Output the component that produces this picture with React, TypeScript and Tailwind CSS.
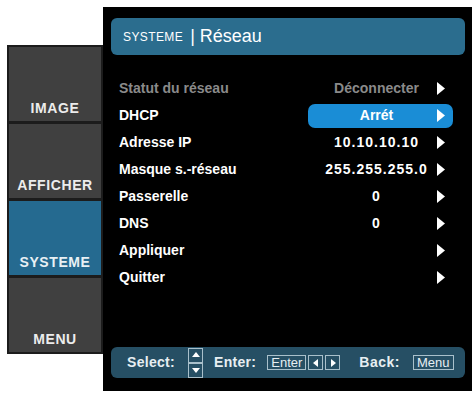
import React from 'react';

const font = { fontFamily: '"Liberation Sans", Arial, sans-serif' };

type Row = { label: string; value?: string; dim?: boolean; active?: boolean; num?: boolean };

const rows: Row[] = [
  { label: 'Statut du réseau', value: 'Déconnecter', dim: true },
  { label: 'DHCP', value: 'Arrét', active: true },
  { label: 'Adresse IP', value: '10.10.10.10', num: true },
  { label: 'Masque s.-réseau', value: '255.255.255.0', num: true },
  { label: 'Passerelle', value: '0', num: true },
  { label: 'DNS', value: '0', num: true },
  { label: 'Appliquer' },
  { label: 'Quitter' },
];

const tabs = [
  { name: 'IMAGE' },
  { name: 'AFFICHER' },
  { name: 'SYSTEME', active: true },
  { name: 'MENU' },
];

function Arrow({ color = '#ffffff' }: { color?: string }) {
  return (
    <svg width="8" height="13" viewBox="0 0 8 13">
      <path d="M0 0 L8 6.5 L0 13 Z" fill={color} />
    </svg>
  );
}

function KeyBox({ children }: { children: React.ReactNode }) {
  return (
    <span className="flex h-[15px] items-center border border-[#a9c0cb] px-[3px] text-[13px] leading-none font-normal text-[#e6eef2]">
      {children}
    </span>
  );
}

function ArrowKey({ dir }: { dir: 'left' | 'right' | 'up' | 'down' }) {
  const d = {
    left: 'M8 2 L3 6 L8 10 Z',
    right: 'M4 2 L9 6 L4 10 Z',
    up: 'M2 8 L6 3 L10 8 Z',
    down: 'M2 4 L6 9 L10 4 Z',
  }[dir];
  return (
    <span className="flex h-[15px] w-[15px] items-center justify-center border border-[#a9c0cb]">
      <svg width="12" height="12" viewBox="0 0 12 12">
        <path d={d} fill="#ffffff" />
      </svg>
    </span>
  );
}

export default function App() {
  return (
    <div className="flex h-[393px] w-[476px] overflow-hidden bg-white" style={font}>
      {/* left tabs */}
      <div className="mt-[45px] ml-[7px] flex h-[309px] w-[96px] flex-col gap-[3px] bg-[#1c1c1c] p-[2px]">
        {tabs.map((t) => (
          <div
            key={t.name}
            className={
              'flex flex-1 items-end justify-center pb-[2px] text-[14px] font-bold tracking-[0.6px] ' +
              (t.active ? 'bg-[#256a90] text-[#e8f0f4]' : 'bg-[#404040] text-[#ececec]')
            }
          >
            {t.name}
          </div>
        ))}
      </div>

      {/* main panel */}
      <div className="mt-[7px] flex h-[384px] w-[369px] flex-col bg-black pt-[11px] pb-[13px] pl-[8px]">
        <div className="flex h-[37px] w-[354px] items-center rounded-[6px] bg-[#2b6d8e] pl-[12px] text-white">
          <span className="text-[12px] tracking-[0.4px]">SYSTEME</span>
          <span className="ml-[7px] text-[18px]">| Réseau</span>
        </div>

        <div className="mt-[20px] flex flex-col">
          {rows.map((r) => (
            <div key={r.label} className="flex h-[27px] items-center pl-[8px]">
              <span
                className={
                  'w-[189px] text-[14px] font-bold ' + (r.dim ? 'text-[#8a8a8a]' : 'text-white')
                }
              >
                {r.label}
              </span>
              <div
                className={
                  'relative flex h-[24px] w-[145px] items-center justify-center pr-[8px] ' +
                  (r.active ? 'rounded-[7px] bg-[#1a8dd6]' : '')
                }
              >
                {r.value && (
                  <span
                    className={
                      'text-[14px] font-bold ' +
                      (r.num ? 'tracking-[1px] ' : '') +
                      (r.dim ? 'text-[#8a8a8a]' : 'text-white')
                    }
                  >
                    {r.value}
                  </span>
                )}
                <span className="absolute top-[5px] right-[8px] flex">
                  <Arrow />
                </span>
              </div>
            </div>
          ))}
        </div>

        <div className="mt-auto flex h-[31px] w-[354px] items-center rounded-[6px] bg-[#264f64] pl-[16px] text-[14px] font-bold text-[#e6eef2]">
          <span className="tracking-[0.3px]">Select:</span>
          <span className="ml-[13px] flex flex-col">
            <ArrowKey dir="up" />
            <ArrowKey dir="down" />
          </span>
          <span className="ml-[11px] tracking-[0.3px]">Enter:</span>
          <span className="ml-[11px] flex items-center gap-[2px]">
            <KeyBox>Enter</KeyBox>
            <ArrowKey dir="left" />
            <ArrowKey dir="right" />
          </span>
          <span className="ml-[19px] tracking-[0.5px]">Back:</span>
          <span className="ml-[13px]">
            <KeyBox>Menu</KeyBox>
          </span>
        </div>
      </div>
    </div>
  );
}
